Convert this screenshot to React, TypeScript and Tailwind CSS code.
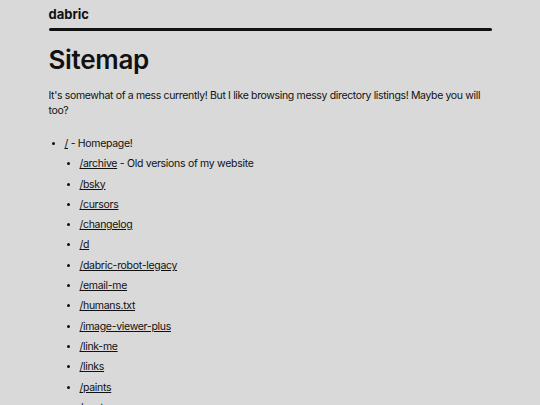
const pages = [
  { href: "/archive", note: " - Old versions of my website" },
  { href: "/bsky" },
  { href: "/cursors" },
  { href: "/changelog" },
  { href: "/d" },
  { href: "/dabric-robot-legacy" },
  { href: "/email-me" },
  { href: "/humans.txt" },
  { href: "/image-viewer-plus" },
  { href: "/link-me" },
  { href: "/links" },
  { href: "/paints" },
  { href: "/posts" },
  { href: "/projects" },
];

export default function App() {
  return (
    <div
      className="min-h-[405px] bg-[#d9d9d9] text-[#111111]"
      style={{ fontFamily: "Inter, 'Noto Sans', sans-serif" }}
    >
      <div className="mx-auto w-[443px]">
        <header className="pt-[6px]">
          <div className="text-[13px] font-bold leading-[16px]">dabric</div>
          <div className="mt-[6px] h-[3px] rounded-full bg-[#111111]" />
        </header>

        <h1 className="mt-[13px] text-[26px] font-semibold leading-[32px] tracking-[-0.3px]">
          Sitemap
        </h1>

        <p className="mt-[12px] text-[10.5px] leading-[15px] tracking-[-0.35px]">
          It's somewhat of a mess currently! But I like browsing messy directory listings! Maybe you will
          too?
        </p>

        <ul className="mt-[16px] list-disc pl-[16px] text-[10.5px] leading-[20.3px] tracking-[-0.3px] marker:text-[9px]">
          <li>
            <a href="/" className="underline">/</a> - Homepage!
            <ul className="list-disc pl-[15px]">
              {pages.map((p) => (
                <li key={p.href}>
                  <a href={p.href} className="underline">{p.href}</a>
                  {p.note}
                </li>
              ))}
            </ul>
          </li>
        </ul>
      </div>
    </div>
  );
}
